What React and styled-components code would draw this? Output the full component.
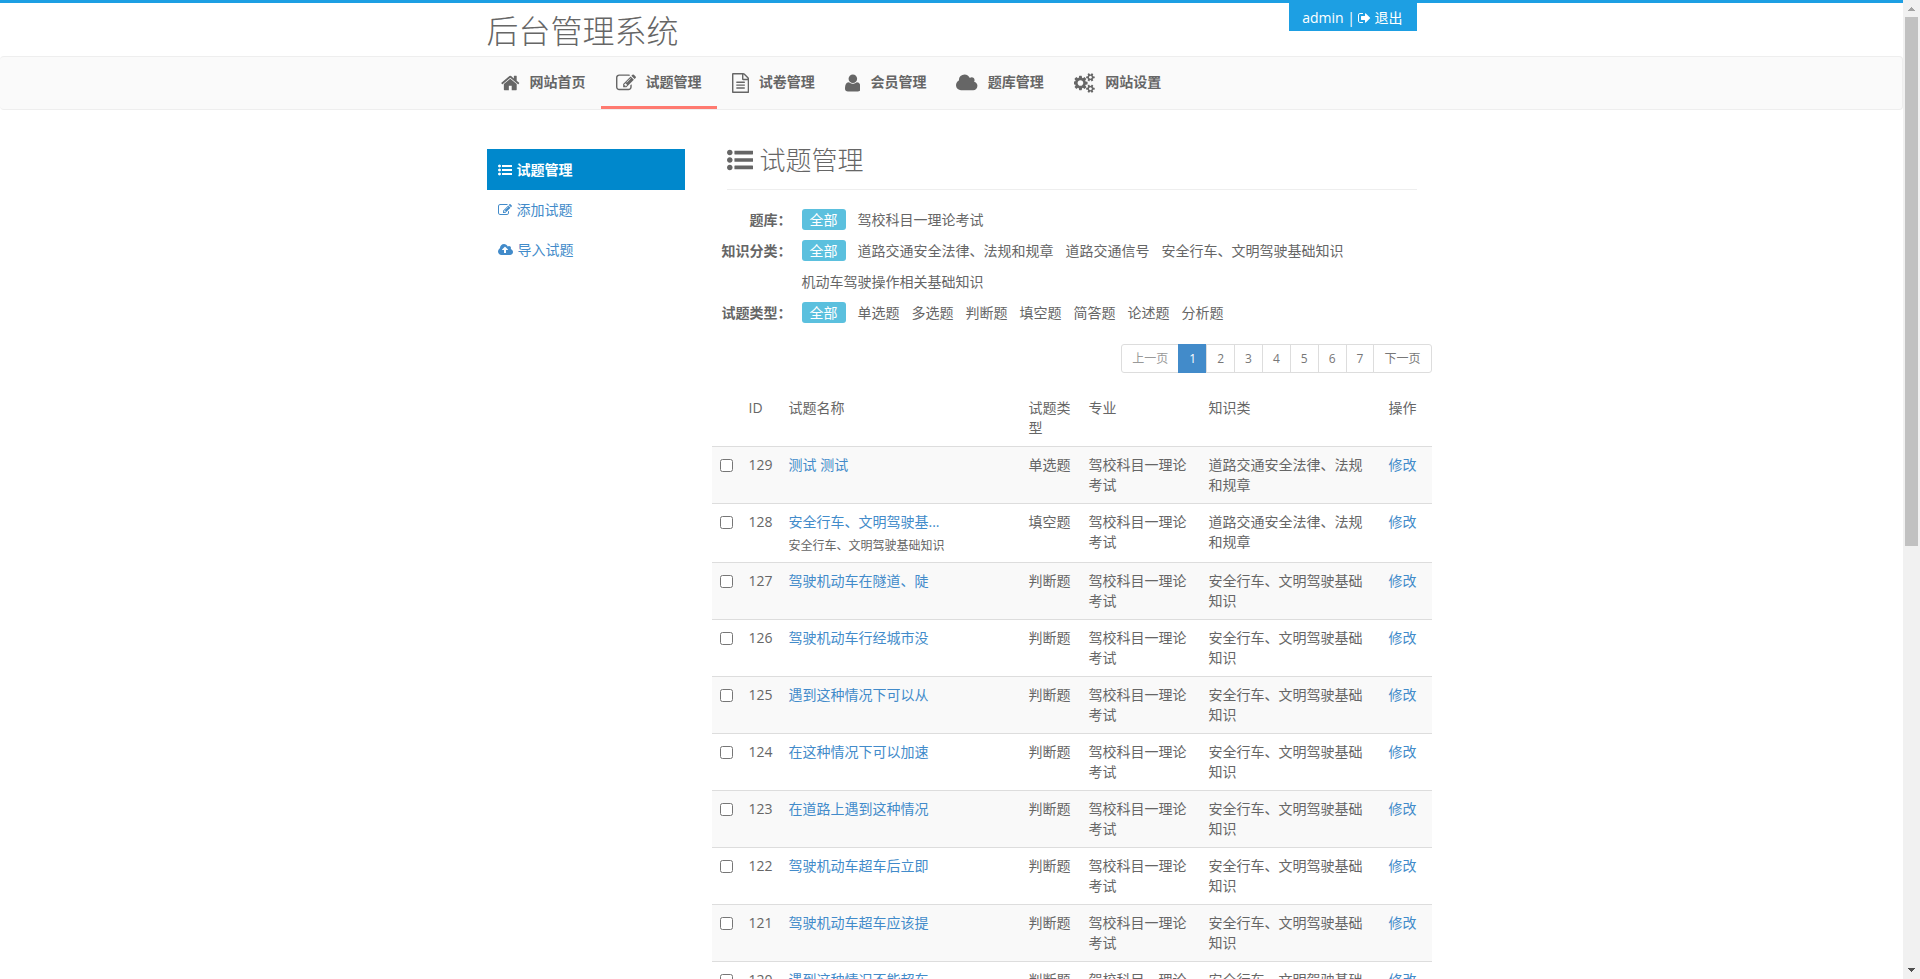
import { useState } from "react";
import styled, { createGlobalStyle } from "styled-components";

// y-up glyphs are mirrored back with flip
const glyphs = {
    home: {
        box: "64 0 1664 1792",
        d: "M1472 992v480q0 26-19 45t-45 19h-384v-384h-256v384h-384q-26 0-45-19t-19-45v-480q0-1 .5-3t.5-3l575-474 575 474q1 2 1 6zm223-69l-62 74q-8 9-21 11h-3q-13 0-21-7l-692-577-692 577q-12 8-24 7-13-2-21-11l-62-74q-8-10-7-23.5t11-21.5l719-599q32-26 76-26t76 26l244 204v-195q0-14 9-23t23-9h192q14 0 23 9t9 23v408l219 182q10 8 11 21.5t-7 23.5z"
    },
    edit: {
        box: "0 0 1792 1792",
        d: "M888 1184l116-116-152-152-116 116v56h96v96h56zm440-720q-16-16-33 1l-350 350q-17 17-1 33t33-1l350-350q17-17 1-33zm80 594v190q0 119-84.5 203.5t-203.5 84.5h-832q-119 0-203.5-84.5t-84.5-203.5v-832q0-119 84.5-203.5t203.5-84.5h832q63 0 117 25 15 7 18 23 3 17-9 29l-49 49q-14 14-32 8-23-6-45-6h-832q-66 0-113 47t-47 113v832q0 66 47 113t113 47h832q66 0 113-47t47-113v-126q0-13 9-22l64-64q15-15 35-7t20 29zm-96-738l288 288-672 672h-288v-288zm444 132l-92 92-288-288 92-92q28-28 68-28t68 28l152 152q28 28 28 68t-28 68z"
    },
    file: {
        box: "128 0 1536 1792",
        d: "M1596 380q28 28 48 76t20 88v1152q0 40-28 68t-68 28h-1344q-40 0-68-28t-28-68v-1600q0-40 28-68t68-28h896q40 0 88 20t76 48zm-444-244v376h376q-10-29-22-41l-313-313q-12-12-41-22zm384 1528v-1024h-416q-40 0-68-28t-28-68v-416h-768v1536h1280zm-1024-864q0-14 9-23t23-9h704q14 0 23 9t9 23v64q0 14-9 23t-23 9h-704q-14 0-23-9t-9-23v-64zm736 224q14 0 23 9t9 23v64q0 14-9 23t-23 9h-704q-14 0-23-9t-9-23v-64q0-14 9-23t23-9h704zm0 256q14 0 23 9t9 23v64q0 14-9 23t-23 9h-704q-14 0-23-9t-9-23v-64q0-14 9-23t23-9h704z"
    },
    user: {
        box: "0 -1536 1408 1792",
        flip: true,
        d: "M1408 131q0-120-73-189.5t-194-69.5h-874q-121 0-194 69.5t-73 189.5q0 53 3.5 103.5t14 109t26.5 108.5t43 97.5t62 81t85.5 53.5t111.5 20q9 0 42-21.5t74.5-48t108-48t133.5-21.5t133.5 21.5t108 48t74.5 48t42 21.5q61 0 111.5-20t85.5-53.5t62-81t43-97.5t26.5-108.5t14-109t3.5-103.5zM1088 1024q0-159-112.5-271.5t-271.5-112.5t-271.5 112.5t-112.5 271.5t112.5 271.5t271.5 112.5t271.5-112.5t112.5-271.5z"
    },
    cloud: {
        box: "64 0 1920 1792",
        d: "M1984 1152q0 159-112.5 271.5t-271.5 112.5h-1088q-185 0-316.5-131.5t-131.5-316.5q0-132 71-241.5t187-163.5q-2-28-2-43 0-212 150-362t362-150q158 0 286.5 88t187.5 230q70-62 166-62 106 0 181 75t75 181q0 75-41 138 129 30 213 134.5t84 239.5z"
    },
    cogs: {
        box: "0 0 1920 1792",
        d: "M832 896q0-106-75-181t-181-75-181 75-75 181 75 181 181 75 181-75 75-181zm768 512q0-52-38-90t-90-38-90 38-38 90q0 53 37.5 90.5t90.5 37.5 90.5-37.5 37.5-90.5zm0-1024q0-52-38-90t-90-38-90 38-38 90q0 53 37.5 90.5t90.5 37.5 90.5-37.5 37.5-90.5zm-384 421v185q0 10-7 19.5t-16 10.5l-155 24q-11 35-32 76 34 48 90 115 7 11 7 20 0 12-7 19-23 30-82.5 89.5t-78.5 59.5q-11 0-21-7l-115-90q-37 19-77 31-11 108-23 155-7 24-30 24h-186q-11 0-20-7.5t-10-17.5l-23-153q-34-10-75-31l-118 89q-7 7-20 7-11 0-21-8-144-133-144-160 0-9 7-19 10-14 41-53t47-61q-23-44-35-82l-152-24q-10-1-17-9.5t-7-19.5v-185q0-10 7-19.5t16-10.5l155-24q11-35 32-76-34-48-90-115-7-11-7-20 0-12 7-20 22-30 82-89t79-59q11 0 21 7l115 90q34-18 77-32 11-108 23-154 7-24 30-24h186q11 0 20 7.5t10 17.5l23 153q34 10 75 31l118-89q8-7 20-7 11 0 21 8 144 133 144 160 0 8-7 19-12 16-42 54t-45 60q23 48 34 82l152 23q10 2 17 10.5t7 19.5zm640 533v140q0 16-149 31-12 27-30 52 51 113 51 138 0 4-4 7-122 71-124 71-8 0-46-47t-52-68q-20 2-30 2t-30-2q-14 21-52 68t-46 47q-2 0-124-71-4-3-4-7 0-25 51-138-18-25-30-52-149-15-149-31v-140q0-16 149-31 13-29 30-52-51-113-51-138 0-4 4-7 4-2 35-20t59-34 30-16q8 0 46 46.5t52 67.5q20-2 30-2t30 2q51-71 92-112l6-2q4 0 124 70 4 3 4 7 0 25-51 138 17 23 30 52 149 15 149 31zm0-1024v140q0 16-149 31-12 27-30 52 51 113 51 138 0 4-4 7-122 71-124 71-8 0-46-47t-52-68q-20 2-30 2t-30-2q-14 21-52 68t-46 47q-2 0-124-71-4-3-4-7 0-25 51-138-18-25-30-52-149-15-149-31v-140q0-16 149-31 13-29 30-52-51-113-51-138 0-4 4-7 4-2 35-20t59-34 30-16q8 0 46 46.5t52 67.5q20-2 30-2t30 2q51-71 92-112l6-2q4 0 124 70 4 3 4 7 0 25-51 138 17 23 30 52 149 15 149 31z"
    },
    list: {
        box: "0 0 1792 1792",
        d: "M384 1408q0 80-56 136t-136 56-136-56-56-136 56-136 136-56 136 56 56 136zm0-512q0 80-56 136t-136 56-136-56-56-136 56-136 136-56 136 56 56 136zm1408 416v192q0 13-9.5 22.5t-22.5 9.5h-1216q-13 0-22.5-9.5t-9.5-22.5v-192q0-13 9.5-22.5t22.5-9.5h1216q13 0 22.5 9.5t9.5 22.5zm-1408-928q0 80-56 136t-136 56-136-56-56-136 56-136 136-56 136 56 56 136zm1408 416v192q0 13-9.5 22.5t-22.5 9.5h-1216q-13 0-22.5-9.5t-9.5-22.5v-192q0-13 9.5-22.5t22.5-9.5h1216q13 0 22.5 9.5t9.5 22.5zm0-512v192q0 13-9.5 22.5t-22.5 9.5h-1216q-13 0-22.5-9.5t-9.5-22.5v-192q0-13 9.5-22.5t22.5-9.5h1216q13 0 22.5 9.5t9.5 22.5z"
    },
    upload: {
        box: "0 0 1920 1792",
        d: "M1280 864q0-14-9-23l-352-352q-9-9-23-9t-23 9l-351 351q-10 12-10 24 0 14 9 23t23 9h224v352q0 13 9.5 22.5t22.5 9.5h192q13 0 22.5-9.5t9.5-22.5v-352h224q13 0 22.5-9.5t9.5-22.5zm640 288q0 159-112.5 271.5t-271.5 112.5h-1088q-185 0-316.5-131.5t-131.5-316.5q0-130 70-240t188-165q-2-30-2-43 0-212 150-362t362-150q156 0 285.5 87t188.5 231q71-62 166-62 106 0 181 75t75 181q0 76-41 138 130 31 213.5 135.5t83.5 238.5z"
    },
    signOut: {
        box: "64 0 1600 1792",
        d: "M704 1440q0 4 1 20t.5 26.5-3 23.5-10 19.5-20.5 6.5h-320q-119 0-203.5-84.5t-84.5-203.5v-704q0-119 84.5-203.5t203.5-84.5h320q13 0 22.5 9.5t9.5 22.5q0 4 1 20t.5 26.5-3 23.5-10 19.5-20.5 6.5h-320q-66 0-113 47t-47 113v704q0 66 47 113t113 47h312l11.5 1 11.5 3 8 5.5 7 9 2 13.5zm928-544q0 26-19 45l-544 544q-19 19-45 19t-45-19-19-45v-288h-448q-26 0-45-19t-19-45v-384q0-26 19-45t45-19h448v-288q0-26 19-45t45-19 45 19l544 544q19 19 19 45z"
    }
};

const menu = [
    { icon: "home", label: "网站首页" },
    { icon: "edit", label: "试题管理", active: true },
    { icon: "file", label: "试卷管理" },
    { icon: "user", label: "会员管理" },
    { icon: "cloud", label: "题库管理" },
    { icon: "cogs", label: "网站设置" }
];

const sideMenu = [
    { icon: "list", label: "试题管理", active: true },
    { icon: "edit", label: "添加试题" },
    { icon: "upload", label: "导入试题" }
];

const filters = [
    { label: "题库：", options: ["全部", "驾校科目一理论考试"] },
    {
        label: "知识分类：",
        options: ["全部", "道路交通安全法律、法规和规章", "道路交通信号", "安全行车、文明驾驶基础知识", "机动车驾驶操作相关基础知识"]
    },
    { label: "试题类型：", options: ["全部", "单选题", "多选题", "判断题", "填空题", "简答题", "论述题", "分析题"] }
];

const bank = "驾校科目一理论考试";
const law = "道路交通安全法律、法规和规章";
const safety = "安全行车、文明驾驶基础知识";

const questions = [
    { id: 129, name: "测试 测试", type: "单选题", category: law },
    { id: 128, name: "安全行车、文明驾驶基...", note: safety, type: "填空题", category: law },
    { id: 127, name: "驾驶机动车在隧道、陡", type: "判断题", category: safety },
    { id: 126, name: "驾驶机动车行经城市没", type: "判断题", category: safety },
    { id: 125, name: "遇到这种情况下可以从", type: "判断题", category: safety },
    { id: 124, name: "在这种情况下可以加速", type: "判断题", category: safety },
    { id: 123, name: "在道路上遇到这种情况", type: "判断题", category: safety },
    { id: 122, name: "驾驶机动车超车后立即", type: "判断题", category: safety },
    { id: 121, name: "驾驶机动车超车应该提", type: "判断题", category: safety },
    { id: 120, name: "遇到这种情况不能超车", type: "判断题", category: safety }
];

const pages = ["上一页", "1", "2", "3", "4", "5", "6", "7", "下一页"];

function Icon({ name, size = 14 }) {
    const { box, d, flip } = glyphs[name];
    const width = (size * Number(box.split(" ")[2])) / 1792;

    return (
        <Glyph viewBox={box} width={width} height={size} aria-hidden="true">
            <path d={d} transform={flip ? "scale(1 -1)" : undefined} />
        </Glyph>
    );
}

function Filter({ label, options }) {
    const [selected, setSelected] = useState(0);

    return (
        <FilterRow>
            <dt>{label}</dt>
            <dd>
                {options.map((option, index) => (
                    <Option key={option} href="#" $active={index === selected} onClick={() => setSelected(index)}>
                        <span>{option}</span>
                    </Option>
                ))}
            </dd>
        </FilterRow>
    );
}

function QuestionTable() {
    return (
        <Table>
            <colgroup>
                <Col $width={29} />
                <Col $width={40} />
                <Col $width={240} />
                <Col $width={60} />
                <Col $width={120} />
                <Col $width={180} />
                <Col $width={51} />
            </colgroup>
            <thead>
                <tr>
                    <th></th>
                    <th>ID</th>
                    <th>试题名称</th>
                    <th>试题类型</th>
                    <th>专业</th>
                    <th>知识类</th>
                    <th>操作</th>
                </tr>
            </thead>
            <tbody>
                {questions.map((question) => (
                    <tr key={question.id}>
                        <td><Check type="checkbox" aria-label={String(question.id)} /></td>
                        <td>{question.id}</td>
                        <td>
                            <Link href="#">{question.name}</Link>
                            {question.note && <Note>{question.note}</Note>}
                        </td>
                        <td>{question.type}</td>
                        <td>{bank}</td>
                        <td>{question.category}</td>
                        <td><Link href="#">修改</Link></td>
                    </tr>
                ))}
            </tbody>
        </Table>
    );
}

export default function App() {
    return (
        <>
            <GlobalStyle />
            <Window>
                <Page>
                    <Header>
                        <Container>
                            <Logo>后台管理系统</Logo>
                            <UserBox>
                                <span>admin |</span>
                                <a href="#"><Icon name="signOut" /> 退出</a>
                            </UserBox>
                        </Container>
                    </Header>
                    <Navbar>
                        <Menu>
                            {menu.map(({ icon, label, active }) => (
                                <MenuLink key={label} href="#" $active={active}>
                                    <Icon name={icon} size={20} />
                                    <span>{label}</span>
                                </MenuLink>
                            ))}
                        </Menu>
                    </Navbar>
                    <Body>
                        <Sidebar>
                            {sideMenu.map(({ icon, label, active }) => (
                                <SideLink key={label} href="#" $active={active}>
                                    <Icon name={icon} />
                                    {label}
                                </SideLink>
                            ))}
                        </Sidebar>
                        <Content>
                            <Title>
                                <Icon name="list" size={26} />
                                试题管理
                            </Title>
                            <Filters>
                                {filters.map((filter) => <Filter key={filter.label} {...filter} />)}
                            </Filters>
                            <Pagination>
                                {pages.map((page) => (
                                    <PageLink key={page} href="#" $active={page === "1"} $muted={page === "上一页"}>
                                        {page}
                                    </PageLink>
                                ))}
                            </Pagination>
                            <QuestionTable />
                        </Content>
                    </Body>
                </Page>
                <ScrollRail aria-hidden="true">
                    <svg width="17" height="17" fill="#a3a3a3"><path d="M5 11v-1h1v-1h1v-1h1v-1h1v1h1v1h1v1h1v1z" /></svg>
                    <ScrollTrack><ScrollThumb /></ScrollTrack>
                    <svg width="17" height="17" fill="#505050"><path d="M5 6v1h1v1h1v1h1v1h1v-1h1v-1h1v-1h1v-1z" /></svg>
                </ScrollRail>
            </Window>
        </>
    );
}

const GlobalStyle = createGlobalStyle`
* {
    box-sizing: border-box;
}
body {
    margin: 0;
    background-color: #fff;
    color: #666;
    font-family: "Open Sans", "Noto Sans CJK SC", sans-serif;
    font-size: 14px;
    line-height: 20px;
}
a {
    color: #428bca;
    text-decoration: none;
}
`
const Glyph = styled.svg`
flex: none;
fill: currentColor;
`
const Window = styled.div`
display: flex;
height: 100vh;
`
const Page = styled.div`
flex: 1;
min-width: 0;
overflow: hidden;
`
const Container = styled.div`
display: flex;
justify-content: space-between;
align-items: flex-start;
width: 100%;
max-width: 960px;
margin: 0 auto;
padding: 0 15px;
`
const Header = styled.header`
min-height: 56px;
border-top: 3px solid #1d9fe3;
`
const Logo = styled.h1`
margin: 0;
padding-top: 2px;
font-size: 32px;
font-weight: 300;
line-height: 51px;
`
const UserBox = styled.div`
display: flex;
gap: 3px;
padding: 5px 14px 3px 13px;
background-color: #1d9fe3;
color: #fff;

a {
    display: flex;
    align-items: center;
    gap: 4px;
    color: #fff;
}
`
const Navbar = styled.nav`
border: 1px solid #eee;
border-left: 0;
border-radius: 4px;
background-color: #fafafa;
`
const Menu = styled(Container)`
justify-content: flex-start;
`
const MenuLink = styled.a`
display: flex;
align-items: center;
gap: 10px;
height: 52px;
padding: 3px 15px 0;
border-bottom: 3px solid ${({ $active }) => $active ? '#ff7a70' : 'transparent'};
color: #666;
font-weight: 700;

span {
    padding-bottom: 2px;
}
`
const Body = styled.div`
display: flex;
gap: 27px;
width: 100%;
max-width: 960px;
margin: 0 auto;
padding: 37px 0 20px 15px;
`
const Sidebar = styled.aside`
flex: 0 0 198px;
padding-top: 2px;
`
const SideLink = styled.a`
display: flex;
align-items: center;
gap: 5px;
padding: ${({ $active }) => $active ? '11px 11px 10px' : '10px 11px'};
background-color: ${({ $active }) => $active ? '#0088cc' : 'transparent'};
color: ${({ $active }) => $active ? '#fff' : '#428bca'};
font-weight: ${({ $active }) => $active ? 700 : 400};
`
const Content = styled.main`
flex: 1;
min-width: 0;
`
const Title = styled.h2`
display: flex;
align-items: center;
gap: 7px;
margin: 0 15px 14px;
padding-bottom: 16px;
border-bottom: 1px solid #eee;
font-size: 26px;
font-weight: 300;
line-height: 26px;
`
const Filters = styled.dl`
margin: 0;
`
const FilterRow = styled.div`
display: grid;
grid-template-columns: 80px 1fr;
column-gap: 10px;
line-height: 31px;

dt {
    font-weight: 700;
    text-align: right;
    white-space: nowrap;
}

dd {
    display: flex;
    flex-wrap: wrap;
    column-gap: 12px;
    margin: 0;
}
`
const Option = styled.a`
color: ${({ $active }) => $active ? '#fff' : '#666'};

span {
    padding: ${({ $active }) => $active ? '1px 8px' : '0'};
    border-radius: 3px;
    background-color: ${({ $active }) => $active ? '#5bc0de' : 'transparent'};
}
`
const Pagination = styled.nav`
display: flex;
justify-content: flex-end;
margin: 16px 0 17px;
`
const PageLink = styled.a`
margin-left: -1px;
padding: 4px 10px;
border: 1px solid ${({ $active }) => $active ? '#428bca' : '#ddd'};
background-color: ${({ $active }) => $active ? '#428bca' : '#fff'};
color: ${({ $active, $muted }) => $active ? '#fff' : $muted ? '#999' : '#777'};
font-size: 12px;
line-height: 19px;

&:first-child {
    border-radius: 3px 0 0 3px;
}
&:last-child {
    border-radius: 0 3px 3px 0;
}
`
const Table = styled.table`
width: 100%;
table-layout: fixed;
border-collapse: collapse;

th, td {
    padding: 8px;
    font-weight: 400;
    text-align: left;
    vertical-align: top;
}

td {
    border-top: 1px solid #ddd;
}

tbody tr:nth-child(odd) {
    background-color: #f9f9f9;
}
`
const Col = styled.col`
width: ${({ $width }) => $width}px;
`
const Check = styled.input`
display: block;
width: 13px;
height: 13px;
margin: 4px 0 0;
`
const Link = styled.a`
color: #428bca;
`
const Note = styled.div`
padding-top: 5px;
font-size: 12px;
line-height: 17px;
`
const ScrollRail = styled.div`
display: flex;
flex-direction: column;
flex: 0 0 17px;
background-color: #f1f1f1;
`
const ScrollTrack = styled.div`
flex: 1;
padding: 0 2px;
`
const ScrollThumb = styled.div`
height: 56%;
background-color: #c1c1c1;
`
